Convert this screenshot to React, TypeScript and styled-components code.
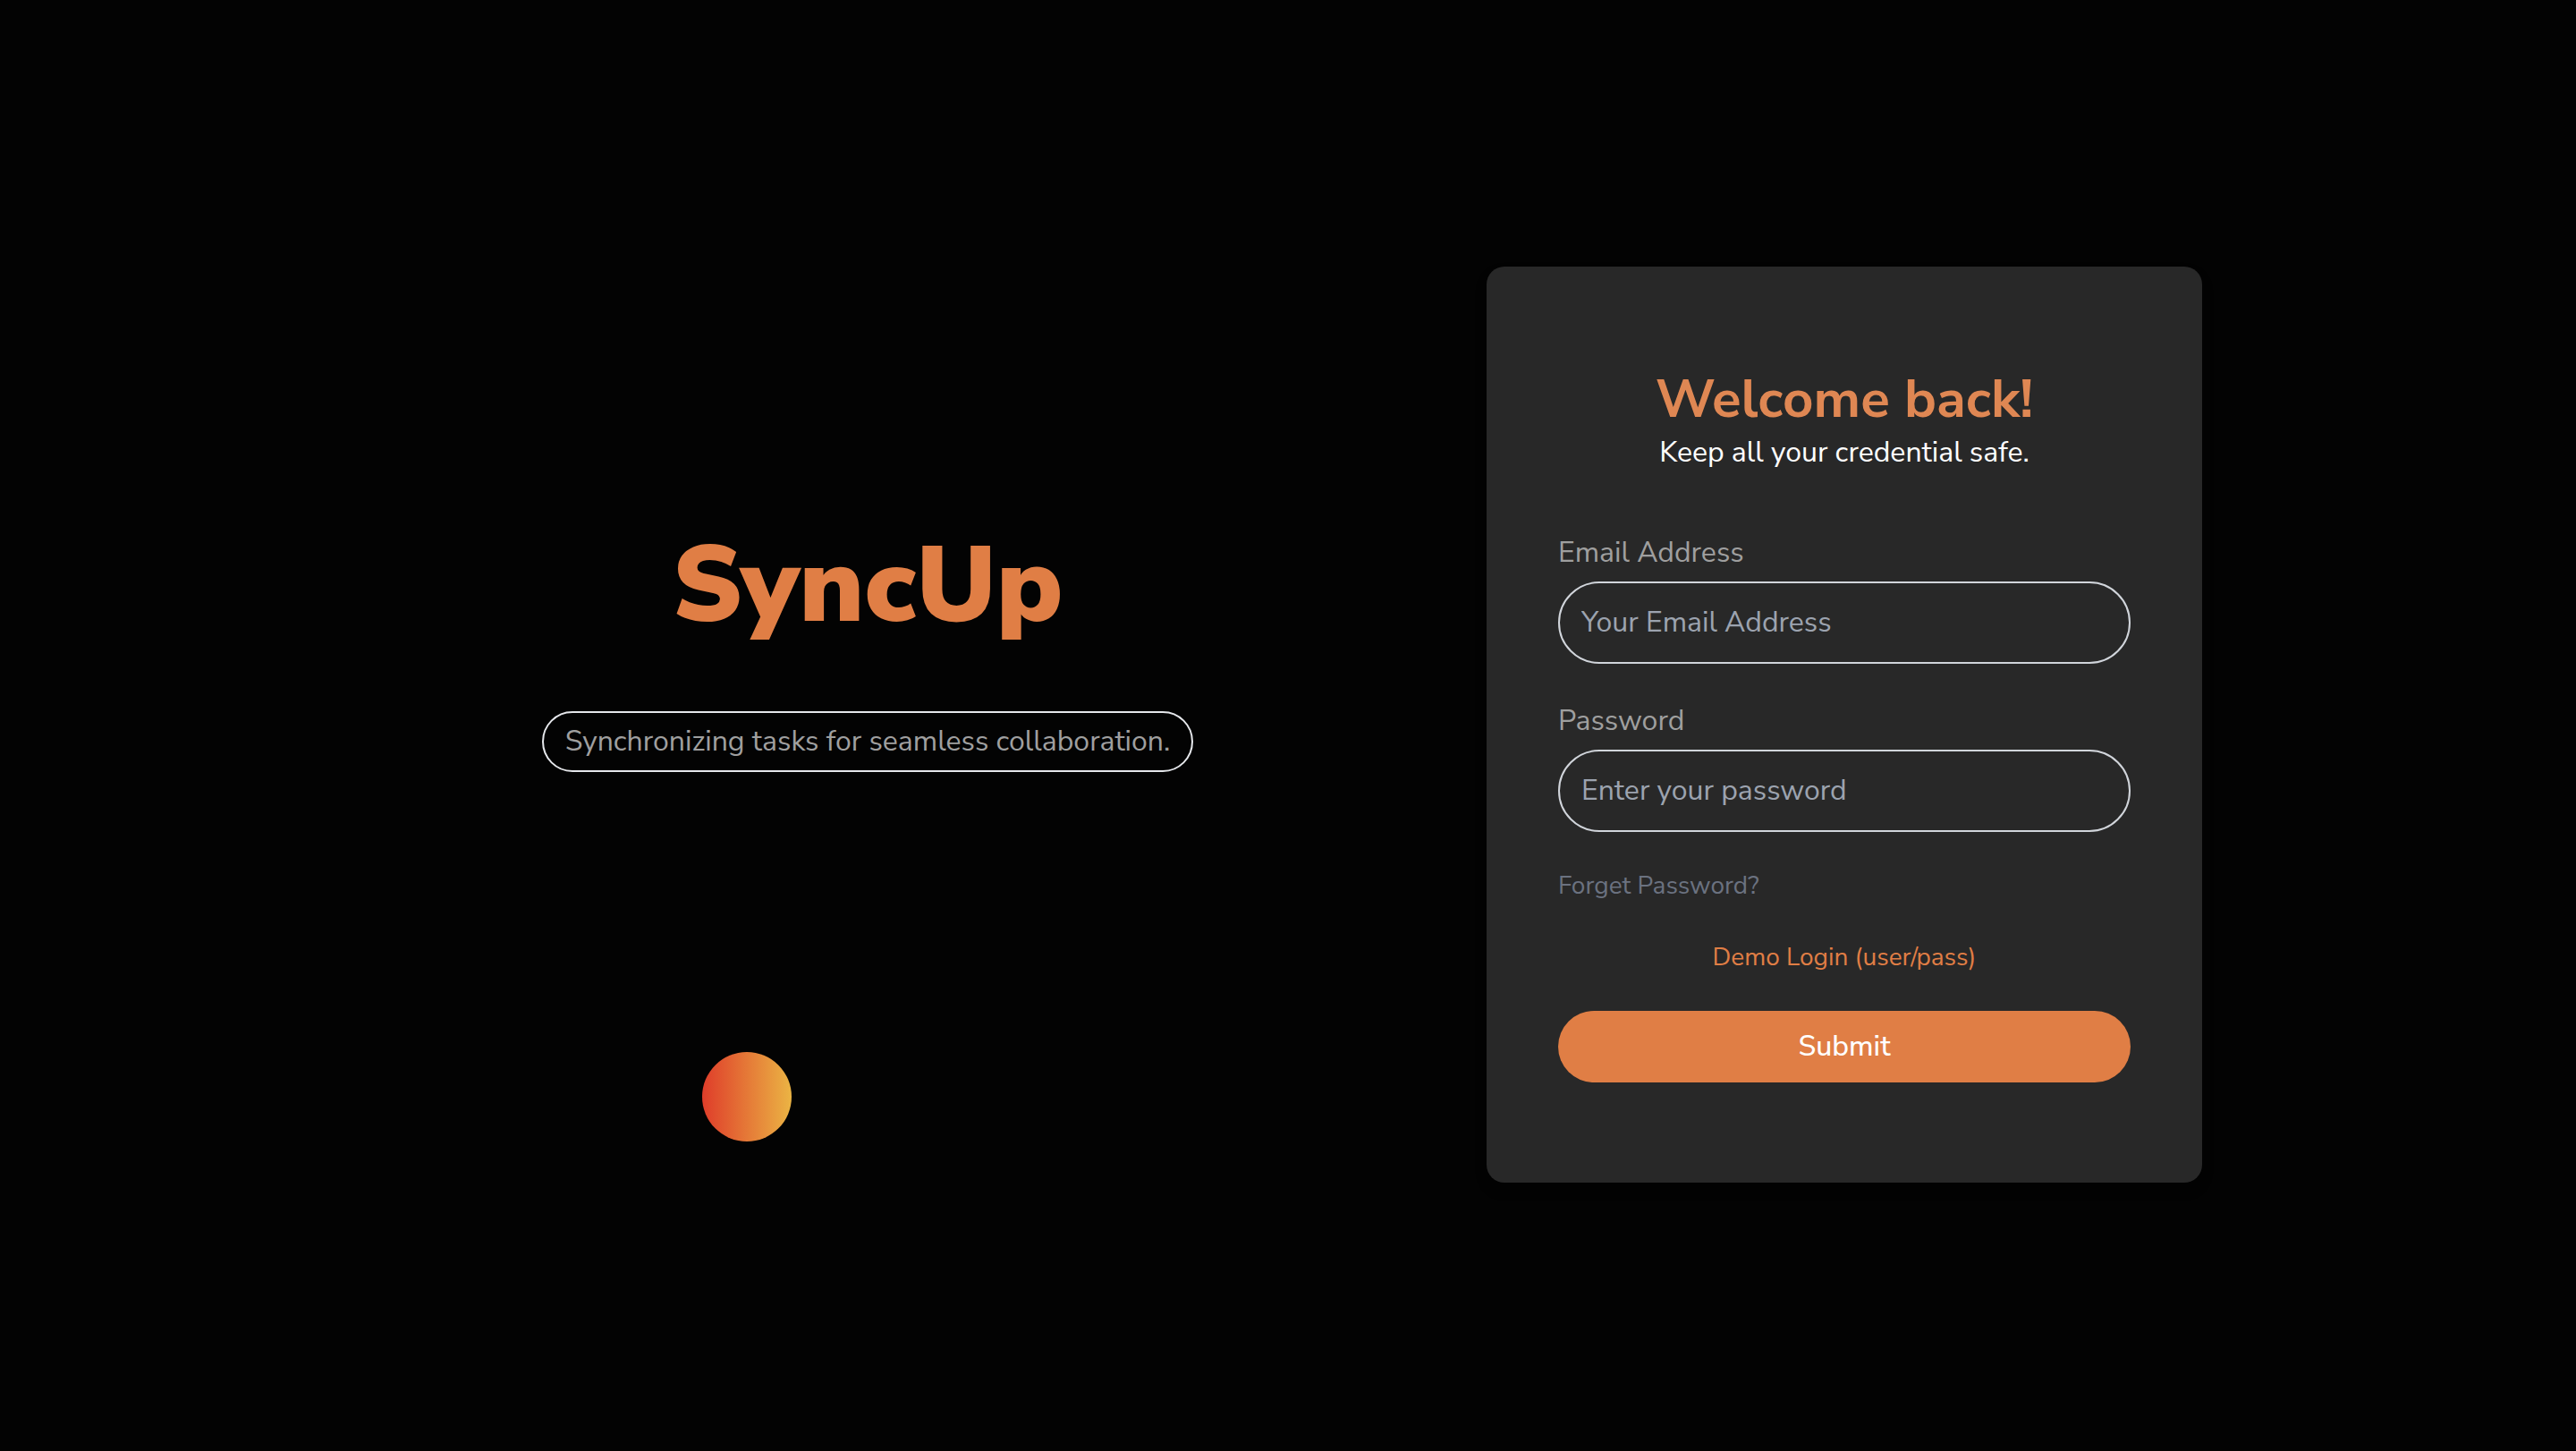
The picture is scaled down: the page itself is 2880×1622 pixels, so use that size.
import React from "react";
import styled, { createGlobalStyle } from "styled-components";

const ACCENT = "#e07e45";
const FONT = '"Nunito Sans", Nunito, Lato, "Open Sans", sans-serif';

const GlobalStyle = createGlobalStyle`
  *, *::before, *::after { box-sizing: border-box; }
  body {
    margin: 0;
    background: #030303;
    color: #ffffff;
    font-family: ${FONT};
    font-size: 32px;
    line-height: 48px;
  }
  input, button { font-family: inherit; }
`;

const Page = styled.main`
  min-height: 100vh;
  display: flex;
  align-items: center;
  justify-content: center;
  padding: 62px 32px 64px;
`;

const Container = styled.div`
  width: 100%;
  max-width: 2044px;
  display: flex;
  align-items: stretch;
  gap: 140px;
`;

const Hero = styled.section`
  flex: 1;
  display: flex;
  flex-direction: column;
  align-items: center;
  padding-top: 277px;
`;

const Brand = styled.h1`
  margin: 0 0 60px;
  color: ${ACCENT};
  font-size: 120px;
  line-height: 160px;
  font-weight: 900;
`;

const Tagline = styled.p`
  margin: 0;
  padding: 8px 24px;
  border: 2px solid #e5e7eb;
  border-radius: 34px;
  color: #9f9f9f;
`;

const BallTrack = styled.div`
  width: 370px;
  margin-top: 313px;
`;

const Ball = styled.div`
  width: 100px;
  height: 100px;
  border-radius: 50%;
  background: linear-gradient(to right, #df3d2a, #ebb444);
`;

const Card = styled.form`
  width: 100%;
  max-width: 800px;
  display: flex;
  flex-direction: column;
  gap: 40px;
  padding: 112px 80px;
  border-radius: 20px;
  background: #282828;
  box-shadow: 0 8px 12px rgba(0, 0, 0, 0.4);
`;

const CardHeader = styled.header`
  margin-bottom: 24px;
  text-align: center;
`;

const Heading = styled.h2`
  margin: 0;
  color: #df8753;
  font-size: 60px;
  line-height: 72px;
  font-weight: 700;
`;

const Subheading = styled.p`
  margin: 0;
`;

const Field = styled.div`
  display: flex;
  flex-direction: column;
  gap: 8px;
`;

const Label = styled.label`
  color: #9f9f9f;
`;

const TextInput = styled.input`
  width: 100%;
  height: 92px;
  padding: 0 24px 2px;
  border: 2px solid #d1d5db;
  border-radius: 46px;
  background: transparent;
  color: #ffffff;
  font-size: 32px;
  outline: none;

  &::placeholder {
    color: #9ca3af;
    opacity: 1;
  }
`;

const ForgotLink = styled.a`
  align-self: flex-start;
  color: #6b7280;
  font-size: 28px;
  line-height: 40px;
  text-decoration: none;
`;

const DemoButton = styled.button`
  align-self: center;
  padding: 0;
  border: 0;
  background: none;
  color: ${ACCENT};
  font-size: 28px;
  line-height: 40px;
  cursor: pointer;
`;

const SubmitButton = styled.button`
  height: 80px;
  padding: 0 24px 2px;
  border: 0;
  border-radius: 40px;
  background: ${ACCENT};
  color: #ffffff;
  font-size: 32px;
  font-weight: 500;
  cursor: pointer;
`;

export default function App() {
  return (
    <>
      <GlobalStyle />
      <Page>
        <Container>
          <Hero>
            <Brand>SyncUp</Brand>
            <Tagline>Synchronizing tasks for seamless collaboration.</Tagline>
            <BallTrack aria-hidden="true">
              <Ball />
            </BallTrack>
          </Hero>
          <Card onSubmit={(event) => event.preventDefault()}>
            <CardHeader>
              <Heading>Welcome back!</Heading>
              <Subheading>Keep all your credential safe.</Subheading>
            </CardHeader>
            <Field>
              <Label htmlFor="email">Email Address</Label>
              <TextInput id="email" type="email" placeholder="Your Email Address" />
            </Field>
            <Field>
              <Label htmlFor="password">Password</Label>
              <TextInput id="password" type="password" placeholder="Enter your password" />
            </Field>
            <ForgotLink href="#forgot">Forget Password?</ForgotLink>
            <DemoButton type="button">Demo Login (user/pass)</DemoButton>
            <SubmitButton type="submit">Submit</SubmitButton>
          </Card>
        </Container>
      </Page>
    </>
  );
}
